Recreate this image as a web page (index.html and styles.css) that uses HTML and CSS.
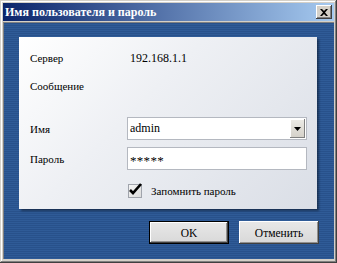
FILE: index.html
```html
<!DOCTYPE html>
<html>
<head>
<meta charset="utf-8">
<link rel="stylesheet" href="styles.css">
</head>
<body>
<div class="window">
  <div class="titlebar">
    <span class="title">Имя пользователя и пароль</span>
    <button class="close" aria-label="Закрыть">
      <svg width="8" height="7" viewBox="0 0 8 7"><path d="M0 0h2l2 2 2-2h2L5 3.5 8 7H6L4 5 2 7H0l3-3.5z" fill="#000"/></svg>
    </button>
  </div>
  <div class="client">
    <div class="panel">
      <div class="row row-server">
        <span class="label">Сервер</span>
        <span class="value">192.168.1.1</span>
      </div>
      <div class="row row-msg">
        <span class="label">Сообщение</span>
      </div>
      <div class="row row-user">
        <span class="label">Имя</span>
        <div class="combo">
          <span class="combo-text">admin</span>
          <span class="combo-btn"><svg width="7" height="4" viewBox="0 0 7 4"><path d="M0 0h7L3.5 4z" fill="#000"/></svg></span>
        </div>
      </div>
      <div class="row row-pass">
        <span class="label">Пароль</span>
        <div class="input"><span class="stars">*****</span></div>
      </div>
      <div class="row row-check">
        <span class="label"></span>
        <label class="check">
          <span class="box"><svg width="16" height="15" viewBox="0 0 16 15"><path d="M2 8l3 3 8-9" fill="none" stroke="#000" stroke-width="2.6"/></svg></span>
          <span class="check-text">Запомнить пароль</span>
        </label>
      </div>
    </div>
    <div class="buttons">
      <button class="btn btn-default">OK</button>
      <button class="btn">Отменить</button>
    </div>
  </div>
</div>
</body>
</html>
```
FILE: styles.css
```css
html, body {
  margin: 0;
  padding: 0;
}
body {
  width: 337px;
  height: 263px;
  overflow: hidden;
  font-family: "Liberation Serif", serif;
  font-size: 11px;
  color: #000;
}
.window {
  width: 337px;
  height: 263px;
  box-sizing: border-box;
  background: #d4d0c8;
  padding: 3px 3px 4px 3px;
  box-shadow: inset -1px -1px #404040, inset 1px 1px #d4d0c8, inset -2px -2px #808080, inset 2px 2px #ffffff;
  display: flex;
  flex-direction: column;
}
.titlebar {
  height: 18px;
  flex: none;
  background: linear-gradient(to right, #0a246a, #a6caf0);
  display: flex;
  align-items: center;
  justify-content: space-between;
  padding: 0 2px 0 2px;
  margin-bottom: 1px;
}
.title {
  color: #fff;
  font-weight: bold;
  font-size: 12px;
  line-height: 14px;
}
.close {
  width: 16px;
  height: 14px;
  padding: 0;
  margin: 0;
  border: none;
  background: #d4d0c8;
  box-shadow: inset -1px -1px #404040, inset 1px 1px #ffffff, inset -2px -2px #808080;
  display: flex;
  align-items: center;
  justify-content: center;
}
.close svg { display: block; margin-left: -1px; }
.client {
  flex: 1;
  background: repeating-linear-gradient(to bottom, #2f5b97 0px, #2f5b97 1px, #28518b 1px, #28518b 2px);
  padding: 15px 15px 0 16px;
  box-shadow: inset 1px 1px #808080;
}
.panel {
  width: 298px;
  height: 172px;
  box-sizing: border-box;
  padding: 14px 0 0 11px;
  background: linear-gradient(135deg, #ffffff 0%, #eef0f4 40%, #dadee6 100%);
  box-shadow: 2px 2px 2px rgba(0, 0, 0, 0.4);
  display: flex;
  flex-direction: column;
}
.row {
  display: flex;
  align-items: center;
}
.label {
  width: 97px;
  flex: none;
  line-height: 14px;
}
.value {
  margin-left: 3px;
  line-height: 14px;
  font-size: 12px;
}
.row-msg { margin-top: 14px; }
.row-user { margin-top: 24px; }
.row-pass { margin-top: 7px; }
.row-check { margin-top: 14px; }
.combo, .input {
  width: 180px;
  height: 23px;
  box-sizing: border-box;
  border: 1px solid #b4b8c0;
  background: #fff;
  display: flex;
  align-items: center;
  justify-content: space-between;
  font-size: 12px;
}
.combo-text {
  padding-left: 2px;
}
.stars {
  padding: 4px 0 0 2px;
  font-size: 13px;
  letter-spacing: 0.3px;
}
.combo-btn {
  width: 15px;
  height: 19px;
  margin-right: 1px;
  background: linear-gradient(#ecebe6, #d4d0c8);
  box-shadow: inset -1px -1px #808080, inset 1px 1px #ffffff;
  display: flex;
  align-items: center;
  justify-content: center;
}
.combo-btn svg { display: block; }
.check {
  display: flex;
  align-items: center;
  margin-left: 1px;
}
.box {
  width: 14px;
  height: 14px;
  box-sizing: border-box;
  border: 1px solid #a0a4ac;
  background: linear-gradient(135deg, #f4f4f4, #dcdcdc);
  position: relative;
}
.box svg {
  position: absolute;
  left: -1px;
  top: -3px;
}
.check-text {
  margin-left: 9px;
  line-height: 14px;
}
.buttons {
  display: flex;
  justify-content: flex-end;
  gap: 10px;
  margin-top: 12px;
}
.btn {
  width: 80px;
  height: 23px;
  padding: 0;
  margin: 0;
  border: none;
  font-family: "Liberation Serif", serif;
  font-size: 11.5px;
  color: #000;
  background: linear-gradient(#e8e8e8, #d8d8d8);
  box-shadow: inset -1px -1px #404040, inset 1px 1px #ffffff, inset -2px -2px #909090;
}
.btn-default {
  box-shadow: inset 0 0 0 1px #000, inset -2px -2px #404040, inset 2px 2px #ffffff, inset -3px -3px #909090;
}
```
